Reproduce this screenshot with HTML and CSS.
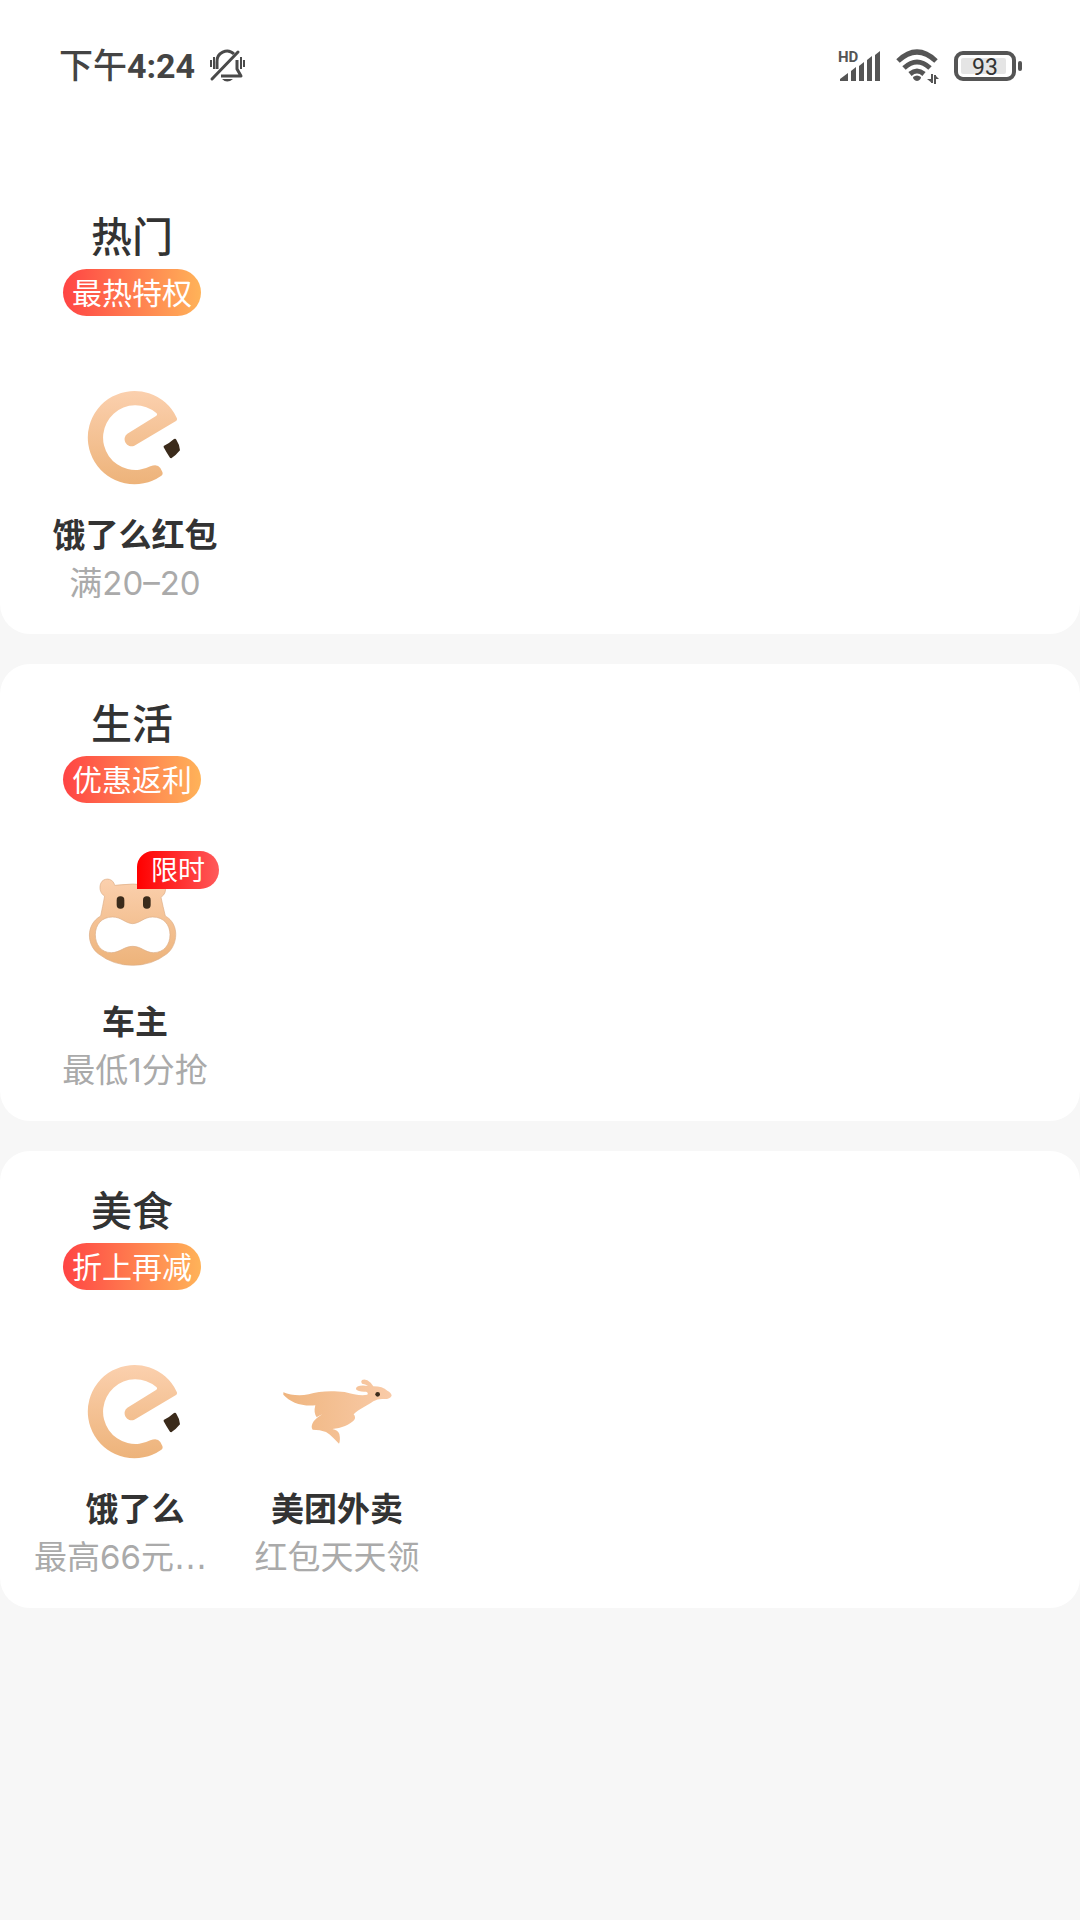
FILE: index.html
```html
<!DOCTYPE html>
<html lang="zh-CN">
<head>
<meta charset="utf-8">
<meta name="viewport" content="width=device-width, initial-scale=1">
<title>特权</title>
<link rel="stylesheet" href="styles.css">
</head>
<body>
<svg class="defs" width="0" height="0" aria-hidden="true">
  <defs>
    <linearGradient id="peach" x1="0" y1="0" x2="0" y2="1">
      <stop offset="0" stop-color="#fbd0ae"/>
      <stop offset="1" stop-color="#edb37a"/>
    </linearGradient>
    <linearGradient id="peach-side" x1="0" y1="0" x2="1" y2="0">
      <stop offset="0" stop-color="#efb57f"/>
      <stop offset="1" stop-color="#f9cba8"/>
    </linearGradient>
    <symbol id="logo-e" viewBox="0 0 390 390">
      <path fill="url(#peach)" d="M318 153Q323 150 320 143A140 140 0 1 0 273 318Q281 313 276 304L271 294Q262 280 241 289A97 97 0 1 1 259 129Q264 134 258 138L172 191A21 21 0 0 0 193 227Z"/>
      <path fill="#3b2b1b" d="M281 228Q299 219 312 207Q317 205 319 209Q329 224 330 241Q317 257 304 265Q300 265 298 260Q289 247 281 232Z"/>
    </symbol>
  </defs>
</svg>

<header class="status">
  <div class="status-group">
    <time class="clock"><span class="period">下午</span>4:24</time>
    <svg class="mute" viewBox="0 0 36 36" fill="none" stroke="#4a4a4a" stroke-width="3">
      <path d="M8 21V14A10 10 0 0 1 25 6M28 12V21L32 28H12" stroke-linejoin="round"/>
      <path d="M3 31L29 4" stroke-linecap="round" stroke-width="3"/>
      <path d="M2 12V19M5 9V21M32 9V21M35 12V19" stroke-width="2"/>
      <path d="M13 31H24Q18 36 13 31Z" fill="#4a4a4a" stroke="none"/>
    </svg>
  </div>
  <div class="status-group">
    <svg class="signal" viewBox="0 0 44 34" fill="#555">
      <text class="hd" x="0" y="13">HD</text>
      <path d="M2 32V30L10 24V32ZM13 32V22L18 18V32ZM21 32V17L26 13V32ZM29 32V11L34 7V32ZM37 32V6L42 2V32Z"/>
    </svg>
    <svg class="wifi" viewBox="0 0 44 36" fill="none" stroke="#555" stroke-width="5">
      <path d="M2 13Q21 -5 40 13M8 20Q21 8 34 20M14 26Q21 20 28 26"/>
      <path d="M17 29Q21 26 25 29Q25 32 21 33Q17 32 17 29Z" fill="#555" stroke="none"/>
      <path d="M36 26V35M39 36V27" stroke-width="2"/>
      <path d="M31 31H36V35ZM39 27L43 31H39Z" fill="#555" stroke="none"/>
    </svg>
    <svg class="battery" viewBox="0 0 70 34">
      <rect x="2" y="4" width="58" height="26" rx="7" fill="none" stroke="#555" stroke-width="4"/>
      <rect x="7" y="9" width="45" height="16" rx="2" fill="#e5e5e5"/>
      <rect x="64" y="12" width="4" height="10" rx="2" fill="#555"/>
      <text class="level" x="31" y="26" text-anchor="middle">93</text>
    </svg>
  </div>
</header>

<main class="sections">
  <section class="card card-first">
    <div class="heading"><h2>热门</h2><span class="pill">最热特权</span></div>
    <div class="items">
      <a class="item" href="#">
        <span class="icon"><svg viewBox="0 0 390 390"><use href="#logo-e"/></svg></span>
        <span class="name">饿了么红包</span>
        <span class="note">满20–20</span>
      </a>
    </div>
  </section>

  <section class="card">
    <div class="heading"><h2>生活</h2><span class="pill">优惠返利</span></div>
    <div class="items">
      <a class="item" href="#">
        <span class="icon">
          <svg viewBox="0 0 390 390">
            <g transform="translate(0 -51)">
              <path fill="url(#peach)" stroke="#dcae87" stroke-width="2" d="M104 168C88 160 86 136 96 124C108 112 130 116 134 136Q188 128 244 136C252 118 280 120 286 140Q290 160 273 172Q279 200 286 228C330 252 324 316 290 342Q246 376 188 376Q130 376 86 342C50 316 46 254 92 228Q98 200 104 168Z"/>
              <path fill="#fff" stroke="#dcae87" stroke-width="2" d="M188 251C210 250 222 231 248 231C282 231 300 255 300 284C300 314 282 338 250 338C226 338 214 319 188 319C162 319 150 338 124 338C94 338 76 314 76 284C76 255 94 231 128 231C154 231 166 250 188 251Z"/>
              <rect x="140" y="169" width="23" height="37" rx="11" fill="#3b2b1b"/>
              <rect x="219" y="169" width="23" height="37" rx="11" fill="#3b2b1b"/>
            </g>
          </svg>
          <span class="badge">限时</span>
        </span>
        <span class="name">车主</span>
        <span class="note">最低1分抢</span>
      </a>
    </div>
  </section>

  <section class="card">
    <div class="heading"><h2>美食</h2><span class="pill">折上再减</span></div>
    <div class="items">
      <a class="item" href="#">
        <span class="icon"><svg viewBox="0 0 390 390"><use href="#logo-e"/></svg></span>
        <span class="name">饿了么</span>
        <span class="note note-cut">最高66元<span class="dots">…</span></span>
      </a>
      <a class="item" href="#">
        <span class="icon">
          <svg viewBox="0 0 390 390">
            <g transform="translate(-6 48)">
              <path fill="url(#peach-side)" d="M40 97C60 105 88 109 116 103C146 92 190 92 224 96C250 103 274 108 292 104Q296 98 288 95Q264 96 258 88Q257 79 270 77Q284 76 294 78Q286 72 276 71Q271 65 276 60Q288 55 302 68L310 79Q338 79 352 92Q364 98 365 107Q360 118 340 117Q324 116 310 124C290 138 268 146 251 163Q259 173 252 181C240 194 214 205 187 207Q204 210 208 222Q212 240 207 251C194 238 184 226 168 216Q150 209 128 209Q122 202 128 189Q137 174 157 163Q146 167 140 172Q130 158 136 136C94 140 60 126 40 104Z"/>
              <circle cx="323" cy="103" r="7" fill="#3b2b1b"/>
            </g>
          </svg>
        </span>
        <span class="name">美团外卖</span>
        <span class="note">红包天天领</span>
      </a>
    </div>
  </section>
</main>
</body>
</html>
```
FILE: styles.css
```css
* {
  box-sizing: border-box;
}

body {
  margin: 0;
  background: #f7f7f7;
  color: #333;
  font-family: Inter, "Noto Sans CJK SC", sans-serif;
}

svg {
  display: block;
  overflow: visible;
}

.defs {
  position: absolute;
}

.status {
  display: flex;
  justify-content: space-between;
  padding: 46px 56px 91px 59px;
  background: #fff;
}

.status-group {
  display: flex;
  align-items: center;
  height: 40px;
  gap: 14px;
}

.clock {
  color: #444;
  font: 700 34px/40px Roboto, "Noto Sans CJK SC", sans-serif;
}

.period {
  font-weight: 500;
}

.mute {
  width: 36px;
  height: 36px;
}

.signal {
  width: 44px;
  height: 34px;
}

.wifi {
  width: 44px;
  height: 36px;
}

.battery {
  width: 70px;
  height: 34px;
}

.hd {
  font: 700 15px Roboto, sans-serif;
}

.level {
  font: 400 23px Roboto, sans-serif;
  fill: #333;
}

.sections {
  display: flex;
  flex-direction: column;
  gap: 30px;
}

.card {
  padding: 34px 34px 29px;
  border-radius: 30px;
  background: #fff;
}

.card-first {
  border-radius: 0 0 30px 30px;
}

.heading {
  display: flex;
  flex-direction: column;
  align-items: center;
  gap: 6px;
  width: 138px;
  margin: 0 0 54px 29px;
}

h2 {
  margin: 0;
  font-size: 41px;
  font-weight: 500;
  line-height: 52px;
}

.pill {
  width: 100%;
  padding-top: 2px;
  border-radius: 24px;
  background: linear-gradient(90deg, #ff4444, #ffb359);
  color: #fff;
  font-size: 30px;
  line-height: 45px;
  text-align: center;
}

.items {
  display: flex;
}

.item {
  display: flex;
  flex-direction: column;
  align-items: center;
  width: 202px;
  color: inherit;
  text-decoration: none;
  white-space: nowrap;
}

.icon {
  position: relative;
  width: 130px;
  height: 130px;
  margin-bottom: 13px;
}

.badge {
  position: absolute;
  top: -6px;
  left: 67px;
  width: 82px;
  padding-top: 2px;
  border-radius: 16px 19px 19px 0;
  background: linear-gradient(90deg, #ff0000, #ff5a5a);
  color: #fff;
  font-size: 27px;
  line-height: 36px;
  text-align: center;
}

.name {
  margin-bottom: 4px;
  font-size: 33px;
  font-weight: 700;
  line-height: 44px;
}

.note {
  color: #aaa;
  font-size: 33px;
  line-height: 44px;
}

.note-cut {
  align-self: flex-start;
  height: 44px;
}

.dots {
  font-family: "DejaVu Sans", sans-serif;
  line-height: 1;
}
```
